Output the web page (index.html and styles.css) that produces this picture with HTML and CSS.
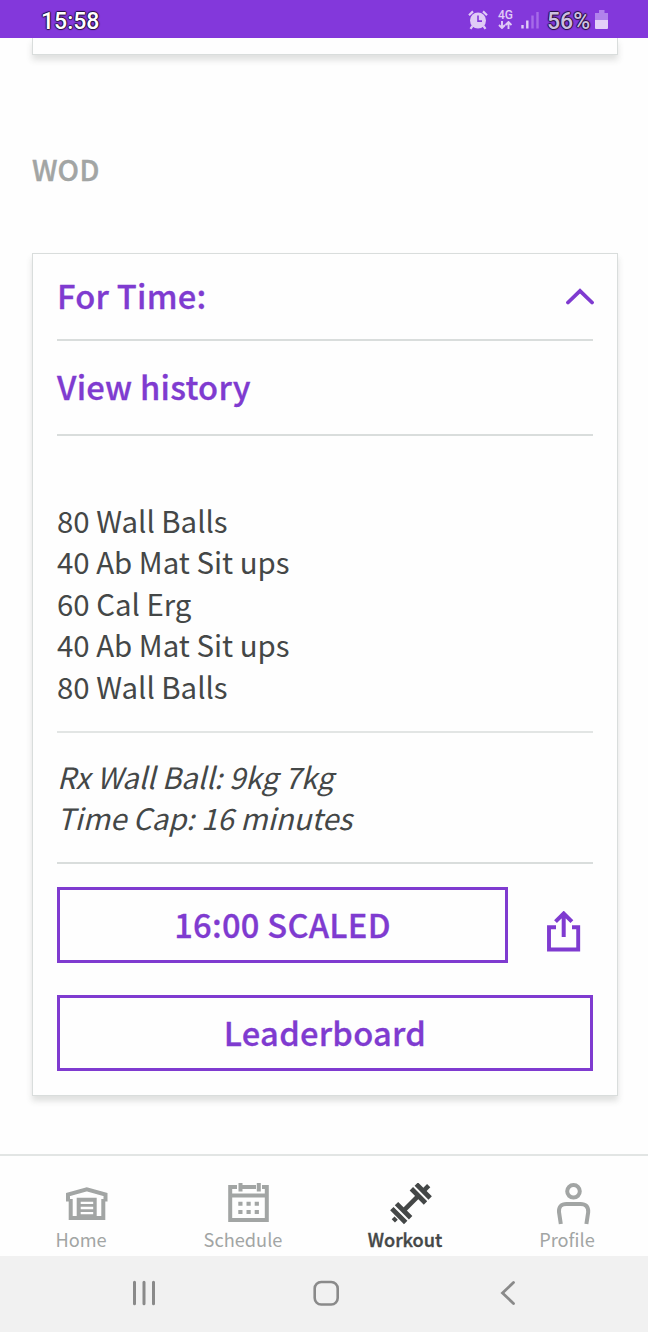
FILE: index.html
```
<!DOCTYPE html>
<html lang="en">
	<head>
	<meta charset="UTF-8" />
	<meta name="viewport" content="width=device-width, initial-scale=1.0" />
	<title>Workout</title>
	<link rel="stylesheet" href="styles.css">
	</head>
	<body>
		<header class="status">
			<span class="clock">15:58</span>
			<div class="status-icons">
				<svg class="alarm" width="20" height="20" viewBox="0 0 20 20">
					<circle cx="10" cy="10.500" r="8" fill="#e0ccf6" />
					<path d="M1 5.200 5 1.400M19 5.200 15 1.400M4.500 16 2.500 18.800M15.500 16l2 2.800" stroke="#e0ccf6" stroke-width="2.200" fill="none" />
					<path d="M10 5.500v5.600h4" stroke="#8338db" stroke-width="1.600" fill="none" />
				</svg>
				<div class="net">
					<span>4G</span>
					<svg width="14" height="8" viewBox="0 0 14 8">
						<path d="M4 0v7M1 4l3 3 3-3M10.500 8V1M7.500 4l3-3 3 3" stroke="#e0ccf6" stroke-width="1.900" fill="none" />
					</svg>
				</div>
				<svg class="signal" width="18" height="18" viewBox="0 0 18 18">
					<path d="M1.500 14v3.500M6.300 9.500v8" stroke="#e0ccf6" stroke-width="2.400" />
					<path d="M11.500 4.500v13M16.500 1v16.500" stroke="#a66be8" stroke-width="2.400" />
				</svg>
				<span class="percent">56%</span>
				<svg class="battery" width="14" height="20" viewBox="0 0 14 20">
					<path d="M4 0h5.500v3H13v7H0V3h4z" fill="#b183ec" />
					<path d="M0 10h13v8a1 1 0 0 1-1 1H1a1 1 0 0 1-1-1z" fill="#e3d0f8" />
				</svg>
			</div>
		</header>
		<main>
			<div class="card card-prev"></div>
			<h2>WOD</h2>
			<section class="card">
				<div class="row title">
					<h3>For Time:</h3>
					<svg width="28" height="18" viewBox="0 0 28 18">
						<path d="M2 14.500 14 3l12 11.500" fill="none" stroke="#7f3bd0" stroke-width="3.800" stroke-linecap="round" />
					</svg>
				</div>
				<div class="row history"><a href="#">View history</a></div>
				<p class="moves">80 Wall Balls<br>
					40 Ab Mat Sit ups<br>
					60 Cal Erg<br>
					40 Ab Mat Sit ups<br>
					80 Wall Balls</p>
				<p class="notes">Rx Wall Ball: 9kg 7kg<br>
					Time Cap: 16 minutes</p>
				<div class="result">
					<button class="score">16:00 SCALED</button>
					<button class="share" aria-label="Share">
						<svg width="34" height="41" viewBox="0 0 34 41">
							<path d="M9 16.200H2v22.300h29.200V16.200H25" fill="none" stroke="#7f3bd0" stroke-width="3.900" />
							<path d="M16.700 26V2.500M8.500 10.700l8.200-8.200 8.200 8.200" fill="none" stroke="#7f3bd0" stroke-width="4" />
						</svg>
					</button>
				</div>
				<button class="board">Leaderboard</button>
			</section>
		</main>
		<nav class="tabs">
			<a href="#">
				<svg width="42" height="42" viewBox="0 0 42 42">
					<path d="M4.700 16v19h32.600V16M2 18.500v-7L20.800 6.300l18.700 5.200v7" fill="none" stroke="#a2a5a4" stroke-width="4" />
					<path fill-rule="evenodd" d="M10.700 14.700h20V35h-20zM14.700 18.700v2.300h12.500v-2.300zM14.700 23.700v2.600h12.500v-2.600zM14.700 29v2.300h12.500V29z" fill="#a2a5a4" />
				</svg>
				<span>Home</span>
			</a>
			<a href="#">
				<svg width="42" height="42" viewBox="0 0 42 42">
					<path d="M9 4H2.200v33h36.600V4H34M14 4h14M2 12.500h37" fill="none" stroke="#a2a5a4" stroke-width="4" />
					<path d="M12.500 0v8.500M30.800 0v8.500" stroke="#a2a5a4" stroke-width="4" />
					<path d="M10.300 20.800h21M10.300 29h21" stroke="#a2a5a4" stroke-width="4" stroke-dasharray="4.200 4" />
				</svg>
				<span>Schedule</span>
			</a>
			<a href="#" class="active">
				<svg width="42" height="42" viewBox="0 0 42 42">
					<g transform="translate(21 20.300) rotate(-45)" stroke="#444747" fill="none">
						<path d="M-9 0H9M-25 0h4M17 0h8" stroke-width="4.600" />
						<path d="M-17.300-9.800v19.600M-10.500-10v20M10.500-10v20M17.300-9.800v19.600" stroke-width="4.800" />
					</g>
				</svg>
				<span>Workout</span>
			</a>
			<a href="#">
				<svg width="42" height="42" viewBox="0 0 42 42">
					<circle cx="21.500" cy="8.300" r="6.300" fill="none" stroke="#a2a5a4" stroke-width="4" />
					<path d="M8.800 41 7 29Q6.500 21 14.500 21h14Q36.500 21 36.200 29L34.400 41" fill="none" stroke="#a2a5a4" stroke-width="4" />
				</svg>
				<span>Profile</span>
			</a>
		</nav>
		<footer class="system">
			<svg width="26" height="26" viewBox="0 0 26 26"><path d="M3.500 2.200v21.600M13 2.200v21.600M22.500 2.200v21.600" stroke="#8a8a8a" stroke-width="3" stroke-linecap="round" /></svg>
			<svg width="26" height="26" viewBox="0 0 26 26"><rect x="1.700" y="2" width="23" height="22.500" rx="6.500" fill="none" stroke="#8a8a8a" stroke-width="2.600" /></svg>
			<svg width="26" height="26" viewBox="0 0 26 26"><path d="M18.500 2.500 7.500 13l11 10.500" fill="none" stroke="#8a8a8a" stroke-width="2.800" stroke-linecap="round" /></svg>
		</footer>
	</body>
</html>
```
FILE: styles.css
```
* { box-sizing: border-box; margin: 0; padding: 0; }
html { font-family: "Noto Sans CJK SC", "Noto Sans", sans-serif; font-size: 29.400px; }
body { background-color: #fefefe; color: #444747; height: 1332px; display: flex; flex-direction: column; overflow: hidden; }
svg { display: block; flex: none; }
a { color: inherit; text-decoration: none; }
button { font: inherit; background: none; border: none; color: #7f3bd0; }

.status { height: 38px; flex: none; background-color: #8338db; display: flex; justify-content: space-between; padding: 0 39px 0 41px; font-family: Roboto, sans-serif; font-weight: 500; }
.clock { font-size: 23px; line-height: 43px; color: #fff; text-shadow: 1px 0 1px #24103d, -1px 0 1px #24103d, 0 1px 1px #24103d, 0 -1px 1px #24103d; }
.status-icons { display: flex; align-items: flex-start; }
.alarm { margin-top: 10px; }
.net { margin: 9px 0 0 10px; width: 15px; font-size: 12px; line-height: 12px; color: #e0ccf6; }
.signal { margin: 11px 0 0 8px; }
.percent { margin-left: 8px; width: 46px; font-size: 23px; line-height: 43px; color: #cdbfe0; text-shadow: 1px 0 1px #24103d, -1px 0 1px #24103d, 0 1px 1px #24103d, 0 -1px 1px #24103d; }
.battery { margin: 10px 0 0 2px; }

main { flex: 1; padding: 0 30px 0 32px; }
.card { border: 1px solid #d9dddc; background-color: #fefefe; padding: 0 24px 24px; box-shadow: 0 5px 6px rgba(60, 70, 65, .16); }
.card-prev { height: 17px; border-top: none; padding: 0; }
h2 { font-size: 28.500px; font-weight: 500; line-height: 40px; color: #a2a5a4; margin: 94px 0 64px; letter-spacing: .3px; -webkit-text-stroke: .4px; }
.row { border-bottom: 2px solid #d9dddc; display: flex; align-items: center; justify-content: space-between; color: #7f3bd0; }
.row, .score, .board { font-size: 32.700px; font-weight: 500; letter-spacing: .25px; -webkit-text-stroke: .3px; }
.row h3, .row a { font: inherit; padding-bottom: 4px; }
.title { height: 87px; }
.title svg { margin-right: -1px; }
.history { height: 95px; }
.moves { height: 297px; padding-top: 64px; line-height: 41.400px; border-bottom: 2px solid #e2e5e4; }
.notes { height: 131px; padding-top: 23px; line-height: 41.400px; font-style: italic; border-bottom: 2px solid #d9dddc; }
.result { display: flex; align-items: center; margin: 23px 0 32px; }
.score, .board { height: 76px; border: 3px solid #7f3bd0; padding-bottom: 4px; }
.score { width: 451px; }
.share { margin: 12px 0 0 39px; }
.board { width: 100%; display: block; }

.tabs { height: 102px; flex: none; border-top: 2px solid #e2e5e4; display: flex; color: #a2a5a4; font-size: 18.200px; }
.tabs a { flex: 1; display: flex; flex-direction: column; align-items: center; padding-top: 27px; }
.tabs svg { margin-left: 12px; }
.tabs span { line-height: 28px; }
.tabs .active { color: #444747; font-weight: 500; -webkit-text-stroke: .4px; }

.system { height: 76px; flex: none; background-color: #f1f1f1; display: flex; align-items: center; justify-content: space-between; padding: 0 127px 2px 131px; }
```
